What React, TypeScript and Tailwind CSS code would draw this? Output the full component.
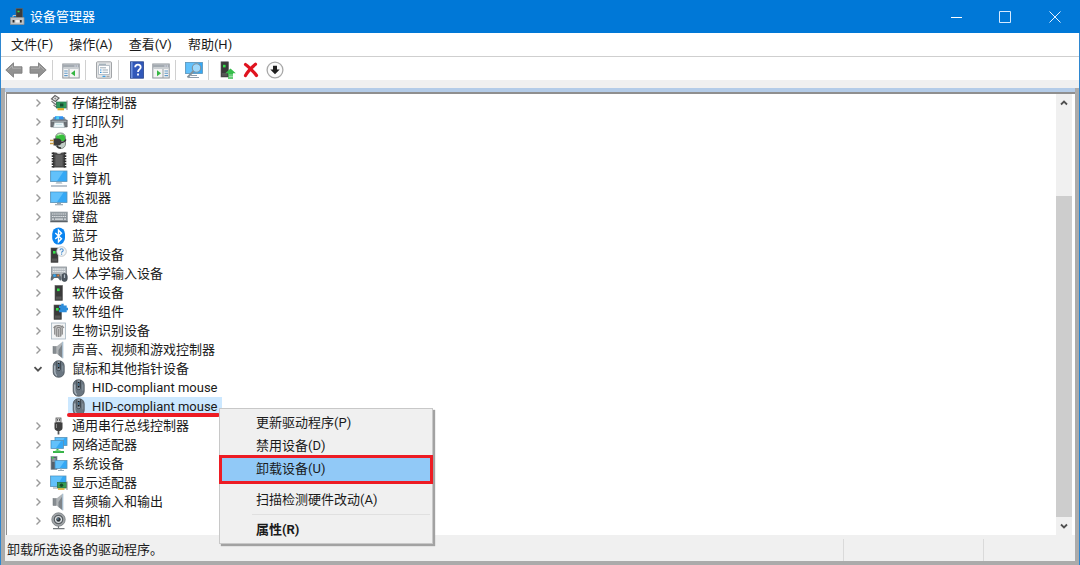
import type { ReactNode } from "react";

const Svg = ({ children, className = "size-[18px]" }: { children: ReactNode; className?: string }) => (
  <svg viewBox="0 0 18 18" className={`${className} shrink-0`} fill="none" aria-hidden="true">
    {children}
  </svg>
);

/* ---------- shared drawing parts ---------- */

const Tower = ({ x = 6, y = 1, w = 7, h = 15 }: { x?: number; y?: number; w?: number; h?: number }) => (
  <g>
    <rect x={x} y={y} width={w} height={h} fill="#3a3a3a" stroke="#5d5d5d" strokeWidth=".6" />
    <rect x={x + 1} y={y + h - 4} width={w - 2} height="3" fill="#555" />
    <rect x={x + 2} y={y + 3} width="2.6" height="2.6" fill="#35e04a" />
  </g>
);

const Screen = ({ x, y, w, h }: { x: number; y: number; w: number; h: number }) => (
  <g>
    <rect x={x} y={y} width={w} height={h} fill="#35a8f5" stroke="#5b93b8" strokeWidth=".8" />
    <path d={`M${x + 0.6} ${y + 0.6}h${w * 0.75}L${x + w * 0.4} ${y + h - 0.6}H${x + 0.6}z`} fill="#62c1fb" />
  </g>
);

/* ---------- device icons ---------- */

const StorageIcon = () => (
  <Svg>
    <path d="M1.500 5 5 1.500 9 4 5.500 7.500z" fill="#f2f2f2" stroke="#666" strokeWidth="1.200" />
    <circle cx="5.300" cy="4.500" r="1.100" fill="#888" />
    <path d="M1.500 7l4 3.500 3-2M3.500 11l2.500 2h1.500" stroke="#777" strokeWidth="1.200" />
    <rect x="6.500" y="8" width="10" height="6" fill="#2f9a5b" stroke="#23704a" strokeWidth=".7" />
    <rect x="10" y="9.500" width="3.400" height="3" fill="#164f31" />
    <path d="M7.500 15.200h6.500" stroke="#dba928" strokeWidth="2.200" />
    <path d="M17 6.500V16" stroke="#888" />
  </Svg>
);

const PrinterIcon = () => (
  <Svg>
    <path d="M3.500 4h11l1.800 3.500H1.700z" fill="#8b959d" />
    <path d="M5 3.200h8l.8 3.300H4.200z" fill="#2f8ff0" />
    <path d="M6.500 3.200h2.500v3.300H6z" fill="#4fd0f0" />
    <path d="M.8 7h16.400v7h-3.200V9.500H4V14H.8z" fill="#6b7075" stroke="#54585c" strokeWidth=".6" />
    <path d="M4.600 9.600h8.800l1.200 4.800H3.400z" fill="#eef7fa" stroke="#9aa7ae" strokeWidth=".7" />
    <path d="M6 11.500h6" stroke="#bfe0e6" strokeWidth=".8" />
    <path d="M1.500 8.200h15" stroke="#b4bbc0" />
  </Svg>
);

const BatteryIcon = () => (
  <Svg>
    <rect x="5.500" y="1" width="10" height="15.500" rx="4.500" fill="#c3cec7" stroke="#6f7b74" strokeWidth=".8" />
    <path d="M6 4.500C7 1.500 14 1.500 15 4.500v4.500H6z" fill="#39c03d" />
    <path d="M7.500 3.500c1-1 3-1.200 4-1" stroke="#b9f3ae" strokeWidth="1.200" />
    <path d="M3.500 6.500H7.500c3 0 4 1.500 4 3.500S10.500 13.500 7.500 13.500H3.500z" fill="#3c3c3c" />
    <path d="M0 8.500h4M0 11.500h4" stroke="#c79a45" strokeWidth="1.300" />
    <path d="M11 10.500c3 0 4-1 5-3M7 13.500c.5 2 2 2.500 4 2.500" stroke="#333" strokeWidth="1.300" />
  </Svg>
);

const FirmwareIcon = () => (
  <Svg>
    <path d="M3 1.500h3.500c.7 1.300 4.300 1.300 5 0H15v15H3z" fill="#4b4b4b" />
    <path d="M5.500 4h7v11h-7z" fill="#626262" />
    <path d="M3 1.500v15M15 1.500v15" stroke="#2d2d2d" strokeWidth="2.600" strokeDasharray="1.700 1" />
    <path d="M6.500 1.500c.7 1.300 4.300 1.300 5 0z" fill="#ddd" />
  </Svg>
);

const ComputerIcon = () => (
  <Svg>
    <Screen x={0.5} y={1} w={16.5} h={10.5} />
    <path d="M6.500 12h5l1 1.800h-7z" fill="#b8c4cc" />
    <path d="M1 16h16" stroke="#8c9dad" strokeWidth="1.200" />
  </Svg>
);

const MonitorIcon = () => (
  <Svg>
    <Screen x={0.5} y={3} w={16.5} h={10.5} />
    <path d="M7 14h4v1H7z" fill="#9aa8b2" />
    <path d="M5 15.700h8" stroke="#9aa8b2" strokeWidth="1.200" />
  </Svg>
);

const KeyboardIcon = () => (
  <Svg>
    <rect x=".5" y="4" width="17" height="10" fill="#8d959b" stroke="#a4abb0" strokeWidth=".7" />
    <path d="M2 6h14M2 8.500h14" stroke="#dde1e4" strokeWidth="1.200" strokeDasharray="1.500 .6" />
    <path d="M2 11.200h2M5 11.200h8M14 11.200h2" stroke="#dde1e4" strokeWidth="1.200" />
    <path d="M.5 13.500h17" stroke="#5a6167" strokeWidth="1.200" />
  </Svg>
);

const BluetoothIcon = () => (
  <Svg>
    <rect x="2.200" y=".5" width="12.800" height="17" rx="6.400" fill="#0a84f0" />
    <path d="M5.300 6l6.200 5.800-3 3V3.200l3 3L5.300 12" stroke="#fff" strokeWidth="1.400" />
  </Svg>
);

const OtherIcon = () => (
  <Svg>
    <Tower x={1} y={2} w={7} h={14.5} />
    <circle cx="11.500" cy="5.500" r="4.800" fill="#f3f6f8" stroke="#b4b9bd" strokeWidth=".8" />
    <path d="M10 4.300c0-2 3.200-2 3.200 0 0 1.300-1.600 1.200-1.600 2.400M11.600 7.600v1.200" stroke="#4a8fd0" strokeWidth="1.100" />
  </Svg>
);

const HidIcon = () => (
  <Svg>
    <rect x="1.500" y="2" width="15" height="8" fill="#b4babf" stroke="#878e94" strokeWidth=".8" />
    <path d="M3 4.200h12M3 6.500h12" stroke="#e8ecee" strokeWidth="1.200" strokeDasharray="1.500 .6" />
    <path d="M.8 15.500C.5 11 2 8.500 4 9h4.500c2 0 3.200 3 2.700 6.500-2 .5-2.200-2.500-3.500-2.500H4.500c-1.200 0-1.500 3-3.700 2.500z" fill="#5f6a73" />
    <circle cx="4.500" cy="10.600" r="1.500" fill="#35a2e8" />
    <circle cx="8.200" cy="10.500" r="1" fill="#e07b35" />
    <rect x="11.800" y="8.500" width="5.400" height="8" rx="2.700" fill="#4d5760" stroke="#39424a" strokeWidth=".7" />
    <path d="M14.500 9.500v3.500" stroke="#b4c0ca" strokeWidth="1.200" />
  </Svg>
);

const SoftwareIcon = () => (
  <Svg>
    <Tower x={5} y={1.5} w={7.5} h={15} />
  </Svg>
);

const ComponentIcon = () => (
  <Svg>
    <Tower x={4} y={2} w={7.5} h={14.5} />
    <path d="M9 2.500h2.300V.8h2.400v1.700h3v2.300H18v2.400h-1.300v2H9V6.800h1.200V5H9z" fill="#2d8ddb" />
  </Svg>
);

const BiometricIcon = () => (
  <Svg>
    <rect x="1.500" y="1" width="14" height="16" fill="#f2f4f5" stroke="#a5b5c0" strokeWidth=".8" />
    <path d="M4.500 12.500V7c0-5.500 8-5.500 8 0v5.500l-2 2.500h-4z" fill="#c9c9c9" />
    <path
      d="M4.700 12.500V6.500c0-4 7.600-4 7.600 0V12.500M6.700 14.500V7c0-2.200 4-2.200 4 0v7.500M8.700 7v8M3.500 6l2-2.500M12 3.500l2 2.500"
      stroke="#868686"
      strokeWidth="1.100"
    />
  </Svg>
);

const SpeakerIcon = () => (
  <Svg>
    <rect x="3" y="5.500" width="3.500" height="7" fill="#868c91" stroke="#6e7478" strokeWidth=".5" />
    <path d="M6.500 5.500 12.500.8v16.400L6.500 12.500z" fill="#b1b5b8" />
    <path d="M8.500 9 12.500 3v14.200L8.500 14z" fill="#7f858a" />
    <path d="M12.700.8v16.400" stroke="#a9bfd0" strokeWidth="1.300" />
  </Svg>
);

const MouseIcon = () => (
  <Svg>
    <rect x="3.200" y=".8" width="11" height="16.400" rx="5" fill="#6a7681" stroke="#4a535b" strokeWidth=".8" />
    <path d="M4.800 5.500v6c0 2 .9 3.400 2 4" stroke="#b4bfc8" strokeWidth="1.200" />
    <path d="M12.800 5.500v6" stroke="#909ca6" strokeWidth=".9" />
    <path d="M6.900 1.300v8.200c0 1.500 3.600 1.500 3.600 0V1.300" fill="#8b98a4" stroke="#343c43" strokeWidth=".8" />
    <path d="M8.700 3v5.500" stroke="#161616" strokeWidth="1.700" />
    <path d="M8.700 4v3" stroke="#6cb4e8" strokeWidth=".7" />
  </Svg>
);

const UsbIcon = () => (
  <Svg>
    <rect x="6" y="1" width="5" height="4.500" fill="#d4d4d4" stroke="#555" strokeWidth=".8" />
    <path d="M7.500 2.200v1.500M9.500 2.200v1.500" stroke="#444" />
    <path d="M4.500 5.500h8V11c0 1.800-1.500 2.500-2.500 3H7c-1-.5-2.500-1.200-2.500-3z" fill="#3f3f3f" />
    <path d="M6.500 7v4" stroke="#858585" />
    <path d="M8.500 14v3.500" stroke="#555" strokeWidth="1.800" />
  </Svg>
);

const NetworkIcon = () => (
  <Svg>
    <Screen x={5} y={1.5} w={12} h={8} />
    <Screen x={1} y={4.5} w={12.5} h={8} />
    <path d="M7.500 13v2M3 16h11" stroke="#38b449" strokeWidth="2" />
    <path d="M5.500 14.700h5" stroke="#7fd886" />
  </Svg>
);

const SystemIcon = () => (
  <Svg>
    <rect x="1" y="1.500" width="6" height="13" fill="#55606a" stroke="#8b949b" strokeWidth=".7" />
    <path d="M2.200 4h3.600M2.200 6h3.600" stroke="#c2c9ce" />
    <rect x="2" y="2" width="1.500" height="1.500" fill="#35e04a" />
    <Screen x={5} y={5.5} w={12} h={8} />
    <path d="M10 14h2M8 15.500h6" stroke="#9aa8b2" />
  </Svg>
);

const DisplayIcon = () => (
  <Svg>
    <Screen x={0.5} y={2} w={15.5} h={10.5} />
    <path d="M3 14h4" stroke="#9aa8b2" strokeWidth="1.200" />
    <rect x="7.500" y="8.500" width="9" height="5.500" fill="#359a53" stroke="#246c3c" strokeWidth=".7" />
    <circle cx="11.500" cy="11.200" r="1.700" fill="#174b2a" />
    <path d="M8 15h6.500" stroke="#e0a92b" strokeWidth="1.600" />
    <path d="M17 7.500v8.500" stroke="#888" />
  </Svg>
);

const CameraIcon = () => (
  <Svg>
    <circle cx="8.500" cy="7.500" r="6.700" fill="#a2a6a9" stroke="#777c80" strokeWidth=".8" />
    <circle cx="8.500" cy="7.500" r="4.200" fill="#dce1e4" stroke="#595e62" strokeWidth="1.200" />
    <circle cx="8.500" cy="7.500" r="2.200" fill="#2f363b" />
    <circle cx="7.900" cy="6.900" r=".7" fill="#8fbfe0" />
    <path d="M8.500 14v2M3 16.700h11.500" stroke="#74797d" strokeWidth="1.200" />
  </Svg>
);

/* ---------- toolbar icons ---------- */

const ArrowIcon = ({ flip = false }: { flip?: boolean }) => (
  <Svg className={flip ? "size-[18px] -scale-x-100" : "size-[18px]"}>
    <path d="M.8 9 8.500 1.800v4H17v6.400H8.500v4z" fill="#929292" stroke="#808080" strokeWidth=".9" strokeLinejoin="round" />
    <path d="M3 8.800 7.500 4.600v2.600H16" stroke="#b0b0b0" />
  </Svg>
);

const PaneIcon = ({ flip = false }: { flip?: boolean }) => (
  <Svg>
    <rect x=".8" y="3" width="16.400" height="14" fill="#f4f4f4" stroke="#8d9399" strokeWidth="1" />
    <path d="M1 3.500h16v3H1z" fill="#a3aab1" />
    <path d="M12.500 5h1.200M14.700 5h1.200" stroke="#eef" />
    <path d="M1 7.500h16" stroke="#c9ced2" />
    {flip ? (
      <>
        <path d="M11 8v9" stroke="#9aa0a6" />
        <path d="M12.500 10h3.500M12.500 12.300h3.500M12.500 14.600h3.500" stroke="#5f97c5" strokeWidth="1.100" />
        <path d="M5 9.300v6l4-3z" fill="#35b642" />
      </>
    ) : (
      <>
        <path d="M7 8v9" stroke="#9aa0a6" />
        <path d="M2.200 10h3.500M2.200 12.300h3.500M2.200 14.600h3.500" stroke="#5f97c5" strokeWidth="1.100" />
        <path d="M13 9.300v6l-4-3z" fill="#35b642" />
      </>
    )}
  </Svg>
);

const PropertiesIcon = () => (
  <Svg>
    <rect x="1.500" y=".8" width="15" height="16.400" rx="1" fill="#e3e4e5" stroke="#a1a4a7" />
    <path d="M3.500 4.500h11v9h-11z" fill="#fff" stroke="#a9b4bd" strokeWidth=".8" />
    <path d="M4 3.300h7" stroke="#a0adb7" strokeWidth="1.200" />
    <path d="M5 6.800h6M7.500 9h5.500M7.500 11.300h5.500" stroke="#9aa8b4" strokeWidth="1" />
    <path d="M5 9h1.500M5 11.300h1.500" stroke="#2f8fd8" strokeWidth="1.200" />
    <path d="M7.500 15.400h3" stroke="#3aa0e6" strokeWidth="1.300" />
    <path d="M11.500 15.400h3" stroke="#aaa" strokeWidth="1.300" />
  </Svg>
);

const HelpIcon = () => (
  <Svg>
    <rect x="2.500" y=".8" width="13" height="16.400" fill="#3158ba" stroke="#27448d" strokeWidth=".8" />
    <path d="M3.800 1v16" stroke="#6f93de" strokeWidth="1.600" />
    <path d="M7.200 6.300c0-3.600 5.500-3.600 5.500 0 0 2.100-2.700 2.200-2.700 4.700M10 12.600v2" stroke="#fff" strokeWidth="1.800" />
  </Svg>
);

const ScanIcon = () => (
  <Svg>
    <Screen x={0.5} y={1.5} w={17} h={11} />
    <path d="M6 14.500h6M4 16.500h10" stroke="#8c9dad" strokeWidth="1.100" />
    <circle cx="11.500" cy="7" r="4.200" fill="#9ed8fb" stroke="#82909a" strokeWidth="1.100" />
    <path d="M8.600 10 2.500 16.500" stroke="#82909a" strokeWidth="1.900" />
  </Svg>
);

const UpdateIcon = () => (
  <Svg>
    <Tower x={3} y={0.8} w={7.5} h={15.2} />
    <path d="M12.500 7.500l5.300 4.800H15v1.500h-5v-1.500H7.300z" fill="#36bd4b" />
    <path d="M10 14.900h5M10 17h5" stroke="#36bd4b" strokeWidth="1.300" />
  </Svg>
);

const DeleteIcon = () => (
  <Svg>
    <path d="M3.500 3.500c2 1.300 9 8 11 11M13.500 3.300c-3 2.500-8 7.500-10 11.200" stroke="#e0131f" strokeWidth="3.200" strokeLinecap="round" />
  </Svg>
);

const DisableIcon = () => (
  <Svg>
    <circle cx="9" cy="9" r="7.900" fill="#fbfbfb" stroke="#a8a8a8" strokeWidth="1.300" />
    <path d="M7 4.800h4v3.700h2.700L9 13.300 4.300 8.500H7z" fill="#1e1e1e" />
  </Svg>
);

const AppIcon = () => (
  <Svg>
    <rect x="8" y=".5" width="6.500" height="10" fill="#3b3b3b" stroke="#666" strokeWidth=".6" />
    <path d="M9.500 3.500h2" stroke="#35e04a" strokeWidth="1.500" />
    <path d="M5 10V7.500h3" stroke="#bbb" />
    <path d="M2.500 9.500h13.500v7H2.500z" fill="#bfc2c5" stroke="#8f9498" strokeWidth=".8" />
    <path d="M5.500 12v2.500M12.800 12v2.500" stroke="#2a2a2a" strokeWidth="1.800" />
    <path d="M7.500 13.300h4" stroke="#f4f4f4" strokeWidth="2.400" />
  </Svg>
);

const Chevron = ({ dir }: { dir: "right" | "down" | "up" | "scrollDown" }) => {
  const shapes = {
    right: "M4.500 2.500 8 6 4.500 9.500",
    down: "M2.500 4.200 6 7.700l3.500-3.500",
    up: "M3 7.500 6 4.500l3 3",
    scrollDown: "M3 4.500l3 3 3-3",
  };
  return (
    <svg viewBox="0 0 12 12" className="size-3" fill="none" aria-hidden="true">
      <path d={shapes[dir]} stroke={dir === "right" ? "#9a9a9a" : "#505050"} strokeWidth={dir === "right" ? 1.4 : 1.8} />
    </svg>
  );
};

/* ---------- data ---------- */

type Device = { name: string; icon: () => ReactNode; children?: string[] };

const devices: Device[] = [
  { name: "存储控制器", icon: StorageIcon },
  { name: "打印队列", icon: PrinterIcon },
  { name: "电池", icon: BatteryIcon },
  { name: "固件", icon: FirmwareIcon },
  { name: "计算机", icon: ComputerIcon },
  { name: "监视器", icon: MonitorIcon },
  { name: "键盘", icon: KeyboardIcon },
  { name: "蓝牙", icon: BluetoothIcon },
  { name: "其他设备", icon: OtherIcon },
  { name: "人体学输入设备", icon: HidIcon },
  { name: "软件设备", icon: SoftwareIcon },
  { name: "软件组件", icon: ComponentIcon },
  { name: "生物识别设备", icon: BiometricIcon },
  { name: "声音、视频和游戏控制器", icon: SpeakerIcon },
  { name: "鼠标和其他指针设备", icon: MouseIcon, children: ["HID-compliant mouse", "HID-compliant mouse"] },
  { name: "通用串行总线控制器", icon: UsbIcon },
  { name: "网络适配器", icon: NetworkIcon },
  { name: "系统设备", icon: SystemIcon },
  { name: "显示适配器", icon: DisplayIcon },
  { name: "音频输入和输出", icon: SpeakerIcon },
  { name: "照相机", icon: CameraIcon },
];

const toolGroups: { label: string; icon: ReactNode }[][] = [
  [
    { label: "后退", icon: <ArrowIcon /> },
    { label: "前进", icon: <ArrowIcon flip /> },
  ],
  [{ label: "显示/隐藏控制台树", icon: <PaneIcon /> }],
  [{ label: "属性", icon: <PropertiesIcon /> }],
  [
    { label: "帮助", icon: <HelpIcon /> },
    { label: "显示/隐藏操作窗格", icon: <PaneIcon flip /> },
  ],
  [{ label: "扫描检测硬件改动", icon: <ScanIcon /> }],
  [
    { label: "更新驱动程序", icon: <UpdateIcon /> },
    { label: "卸载设备", icon: <DeleteIcon /> },
    { label: "禁用设备", icon: <DisableIcon /> },
  ],
];

/* ---------- page parts ---------- */

const ContextMenu = () => {
  const item = "block w-full pl-9 text-left leading-[23px]";
  return (
    <div
      role="menu"
      className="absolute top-[11px] left-[151px] z-10 w-[214px] border border-[#c8c8c8] bg-[#f0f0f0] py-0.5 shadow-[2px_2px_1px_#a2a2a2]"
    >
      <button role="menuitem" className={item}>更新驱动程序(P)</button>
      <button role="menuitem" className={item}>禁用设备(D)</button>
      <button role="menuitem" className={`${item} relative bg-[#91c9f7] pb-px`}>
        卸载设备(U)
        <span className="absolute -inset-x-px -top-0.5 -bottom-[3px] border-3 border-[#ed1c24]" />
      </button>
      <div role="separator" className="h-[7px]" />
      <button role="menuitem" className={item}>扫描检测硬件改动(A)</button>
      <div role="separator" className="flex h-[7px] items-center pr-0.5 pl-8">
        <span className="h-px w-full bg-[#e0e0e0]" />
      </div>
      <button role="menuitem" className={`${item} font-bold`}>属性(R)</button>
    </div>
  );
};

const ChildRow = ({ name, selected }: { name: string; selected: boolean }) => (
  <li role="treeitem" aria-selected={selected} className="flex h-[19px] pl-[61px]">
    <div className={`relative flex items-center gap-1 pr-1 pl-0.5 ${selected ? "bg-[#cce8ff]" : ""}`}>
      <MouseIcon />
      <span className="whitespace-nowrap">{name}</span>
      {selected && (
        <>
          <span className="absolute right-0.5 -bottom-px -left-px h-1 rounded-full bg-[#ed1c24]" />
          <ContextMenu />
        </>
      )}
    </div>
  </li>
);

const DeviceRow = ({ device }: { device: Device }) => {
  const Icon = device.icon;
  return (
    <li role="treeitem" aria-expanded={!!device.children}>
      <div className="flex h-[19px] items-center pl-[25px]">
        <button aria-label={device.children ? "折叠" : "展开"} className="mr-1.5">
          <Chevron dir={device.children ? "down" : "right"} />
        </button>
        <Icon />
        <span className="ml-1 whitespace-nowrap">{device.name}</span>
      </div>
      {device.children && (
        <ul role="group">
          {device.children.map((name, i) => (
            <ChildRow key={i} name={name} selected={i === 1} />
          ))}
        </ul>
      )}
    </li>
  );
};

export default function App() {
  return (
    <div className="flex min-h-screen flex-col bg-white font-['Roboto','Noto_Sans_CJK_SC',sans-serif] text-[13px] leading-[19px] text-[#1a1a1a]">
      <header className="flex h-[33px] shrink-0 items-center bg-[#0078d7] pl-2 text-white">
        <AppIcon />
        <h1 className="ml-1 flex-1">设备管理器</h1>
        <button aria-label="最小化" className="flex h-full w-12 items-center justify-center">
          <svg viewBox="0 0 12 12" className="size-3" stroke="#fff"><path d="M1 6.500h11" /></svg>
        </button>
        <button aria-label="最大化" className="flex h-full w-[50px] items-center justify-center">
          <svg viewBox="0 0 12 12" className="size-3" fill="none" stroke="#d6eaff"><path d="M.5 .5h11v11H.5z" /></svg>
        </button>
        <button aria-label="关闭" className="flex h-full w-[50px] items-center justify-center">
          <svg viewBox="0 0 12 12" className="size-3" stroke="#e6f2ff"><path d="M.5 .5l11 11M11.500 .5l-11 11" /></svg>
        </button>
      </header>

      <div className="flex flex-1 flex-col border-x border-[#2f87d0]">
        <nav className="flex h-[23px] shrink-0 items-center gap-4 pl-2.5">
          {["文件(F)", "操作(A)", "查看(V)", "帮助(H)"].map((label) => (
            <button key={label}>{label}</button>
          ))}
        </nav>

        <div role="toolbar" className="flex h-6 shrink-0 items-center border-t border-[#cfcfcf] pt-0.5 pl-px">
          {toolGroups.map((group, g) => (
            <div key={g} className="flex items-center">
              {g > 0 && <span className="mr-1.5 ml-0.5 h-5 w-px bg-[#d0d0d0]" />}
              {group.map((tool) => (
                <button key={tool.label} aria-label={tool.label} className="flex w-6 justify-center">
                  {tool.icon}
                </button>
              ))}
            </div>
          ))}
        </div>

        <div className="h-2 shrink-0 bg-[#f0f0f0]" />

        <div className="flex flex-1 flex-col border-x-4 border-b-4 border-[#ababab] bg-[#f0f0f0]">
          <div className="h-1 shrink-0 bg-[#b4cce8]" />
          <main className="ml-px flex flex-1 border-t-2 border-l border-[#8f8f8f] bg-white">
            <ul role="tree" className="-mt-px flex-1 pb-1">
              {devices.map((device) => (
                <DeviceRow key={device.name} device={device} />
              ))}
            </ul>
            <div className="mr-[3px] flex w-4 flex-col items-center bg-[#f0f0f0]">
              <button aria-label="向上滚动" className="flex h-[18px] items-center">
                <Chevron dir="up" />
              </button>
              <div className="flex w-full flex-1 flex-col">
                <div className="grow-[84]" />
                <div className="w-full grow-[321] bg-[#cdcdcd]" />
              </div>
              <button aria-label="向下滚动" className="flex h-[18px] items-center">
                <Chevron dir="scrollDown" />
              </button>
            </div>
          </main>
          <footer className="flex h-[26px] shrink-0 pt-1 pl-0.5">
            <p className="flex-1 leading-[22px]">卸载所选设备的驱动程序。</p>
            <span className="w-[140px] border-l border-[#dadada]" />
            <span className="w-[92px] border-l border-[#dadada]" />
          </footer>
        </div>
      </div>
    </div>
  );
}
